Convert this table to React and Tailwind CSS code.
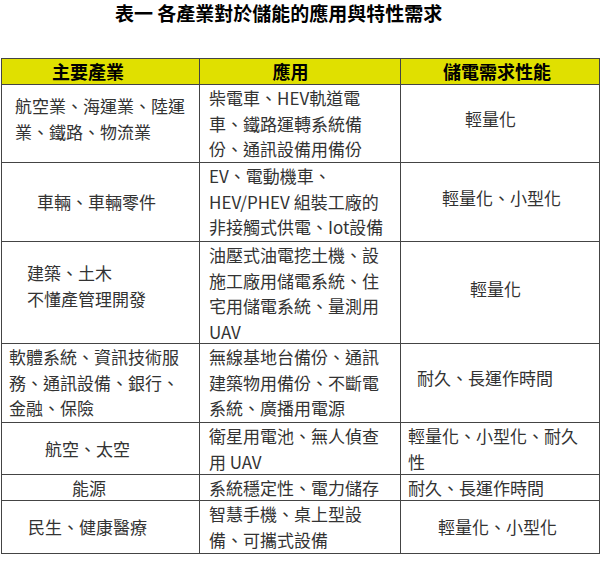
import React from "react";

const Lines = ({ lines }) => (
  <>
    {lines.map((l, i) => (
      <div key={i} className="whitespace-nowrap">{l}</div>
    ))}
  </>
);

export default function App() {
  const cellBase = "border-r border-b border-[#444] overflow-hidden";
  return (
    <div className="w-[600px] h-[580px] bg-white font-['Noto_Sans_CJK_TC','Noto_Sans',sans-serif] text-[#333]">
      <div className="h-[58px] pl-[115px] text-[19px] leading-[26px] font-bold text-black">
        表一 各產業對於儲能的應用與特性需求
      </div>
      <div className="ml-[1px] w-[599px] border-t border-l border-[#444] grid grid-cols-[198px_201px_199px] grid-rows-[26px_78px_79px_102px_79px_52px_26px_53px] text-[17px] leading-[25.5px]">
        {/* header */}
        <div className={`${cellBase} bg-[#e0e000] flex items-center justify-center pr-[25px] text-[18px] font-bold text-black`}>主要產業</div>
        <div className={`${cellBase} bg-[#e0e000] flex items-center justify-center pr-[19px] text-[18px] font-bold text-black`}>應用</div>
        <div className={`${cellBase} bg-[#e0e000] flex items-center justify-center pr-[6px] text-[18px] font-bold text-black`}>儲電需求性能</div>

        {/* row 1 */}
        <div className={`${cellBase} pl-[13px] pt-[8px]`}>
          <Lines lines={["航空業、海運業、陸運", "業、鐵路、物流業"]} />
        </div>
        <div className={`${cellBase} pl-[9px]`}>
          <Lines lines={["柴電車、HEV軌道電", "車、鐵路運轉系統備", "份、通訊設備用備份"]} />
        </div>
        <div className={`${cellBase} flex items-center pl-[64px] pb-[10px]`}>輕量化</div>

        {/* row 2 */}
        <div className={`${cellBase} flex items-center pl-[35px]`}>車輛、車輛零件</div>
        <div className={`${cellBase} pl-[9px]`}>
          <Lines lines={["EV、電動機車、", "HEV/PHEV 組裝工廠的", "非接觸式供電、Iot設備"]} />
        </div>
        <div className={`${cellBase} flex items-center pl-[41px] pb-[8px]`}>輕量化、小型化</div>

        {/* row 3 */}
        <div className={`${cellBase} pl-[25px] pt-[18px]`}>
          <Lines lines={["建築、土木", "不懂產管理開發"]} />
        </div>
        <div className={`${cellBase} pl-[9px]`}>
          <Lines lines={["油壓式油電挖土機、設", "施工廠用儲電系統、住", "宅用儲電系統、量測用", "UAV"]} />
        </div>
        <div className={`${cellBase} flex items-center pl-[69px] pb-[8px]`}>輕量化</div>

        {/* row 4 */}
        <div className={`${cellBase} pl-[7px]`}>
          <Lines lines={["軟體系統、資訊技術服", "務、通訊設備、銀行、", "金融、保險"]} />
        </div>
        <div className={`${cellBase} pl-[9px]`}>
          <Lines lines={["無線基地台備份、通訊", "建築物用備份、不斷電", "系統、廣播用電源"]} />
        </div>
        <div className={`${cellBase} flex items-center pl-[16px] pb-[10px]`}>耐久、長運作時間</div>

        {/* row 5 */}
        <div className={`${cellBase} flex items-center pl-[43px]`}>航空、太空</div>
        <div className={`${cellBase} pl-[9px]`}>
          <Lines lines={["衛星用電池、無人偵查", "用 UAV"]} />
        </div>
        <div className={`${cellBase} pl-[7px]`}>
          <Lines lines={["輕量化、小型化、耐久", "性"]} />
        </div>

        {/* row 6 */}
        <div className={`${cellBase} flex items-center pl-[70px]`}>能源</div>
        <div className={`${cellBase} pl-[9px] flex items-center`}>系統穩定性、電力儲存</div>
        <div className={`${cellBase} pl-[7px] flex items-center`}>耐久、長運作時間</div>

        {/* row 7 */}
        <div className={`${cellBase} flex items-center pl-[26px]`}>民生、健康醫療</div>
        <div className={`${cellBase} pl-[9px]`}>
          <Lines lines={["智慧手機、桌上型設", "備、可攜式設備"]} />
        </div>
        <div className={`${cellBase} flex items-center pl-[37px]`}>輕量化、小型化</div>
      </div>
    </div>
  );
}
